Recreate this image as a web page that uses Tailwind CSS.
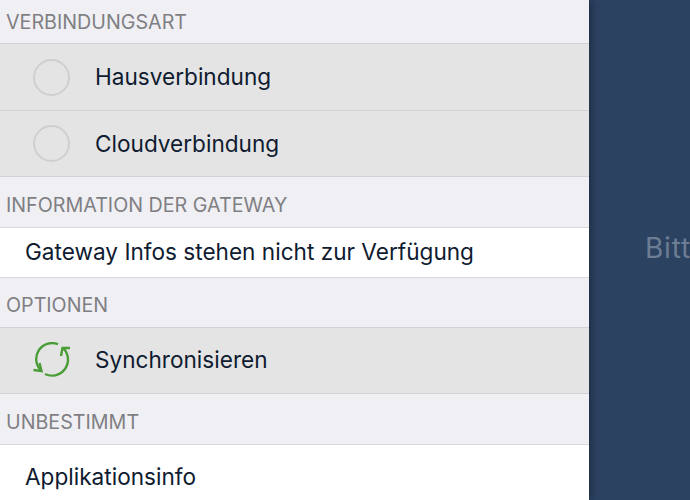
<!DOCTYPE html>
<html lang="de">
<head>
    <meta charset="UTF-8">
    <meta name="viewport" content="width=device-width, initial-scale=1.0">
    <title>Einstellungen</title>
    <script src="https://cdn.jsdelivr.net/npm/@tailwindcss/browser@4"></script>
</head>
<body class="bg-[#2c4261] overflow-hidden font-['Inter',sans-serif]">
    <div class="flex w-[690px] h-[500px] overflow-hidden">
        <!-- Menu -->
        <div class="w-[589px] h-[500px] shrink-0 bg-[#efeff4] shadow-[2px_0_8px_rgba(0,0,0,0.35)] z-10">
            <div class="h-[43px] pl-[6px] pt-[11px] text-[19.7px] leading-[22px] text-[#7f7f83]">VERBINDUNGSART</div>
            <div class="h-[67px] flex items-center bg-[#e4e4e4] border-t border-[#d2d2d4]">
                <div class="w-[37px] h-[37px] ml-[33px] rounded-full border-2 border-[#cfcfd3]"></div>
                <div class="ml-[25px] text-[22.6px] text-[#0f1b30]">Hausverbindung</div>
            </div>
            <div class="h-[67px] flex items-center bg-[#e4e4e4] border-t border-b border-[#d2d2d4]">
                <div class="w-[37px] h-[37px] ml-[33px] rounded-full border-2 border-[#cfcfd3]"></div>
                <div class="ml-[25px] text-[22.6px] text-[#0f1b30]">Cloudverbindung</div>
            </div>

            <div class="h-[50px] pl-[6px] pt-[17px] text-[19.7px] leading-[22px] text-[#7f7f83]">INFORMATION DER GATEWAY</div>
            <div class="h-[51px] flex items-center pl-[25px] pb-[2px] bg-white border-t border-b border-[#d8d8da] text-[22.6px] text-[#0f1b30]">Gateway Infos stehen nicht zur Verfügung</div>

            <div class="h-[49px] pl-[6px] pt-[16px] text-[19.7px] leading-[22px] text-[#7f7f83]">OPTIONEN</div>
            <div class="h-[67px] flex items-center bg-[#e4e4e4] border-t border-b border-[#d2d2d4]">
                <svg class="ml-[33px] w-[37px] h-[37px] shrink-0" viewBox="0 0 37 37" fill="none" stroke="#4a9d36" stroke-width="2.4">
                    <path d="M25 2.2 A16 16 0 0 0 8.5 29"/>
                    <path d="M0.5 28 L8.5 29 L6.5 21"/>
                    <path d="M12 32 A16 16 0 0 0 30 6"/>
                    <path d="M28 14 L29.5 6 L37 6"/>
                </svg>
                <div class="ml-[25px] pb-[1px] text-[22.6px] text-[#0f1b30]">Synchronisieren</div>
            </div>

            <div class="h-[50px] pl-[6px] pt-[17px] text-[19.7px] leading-[22px] text-[#7f7f83]">UNBESTIMMT</div>
            <div class="h-[60px] flex items-center pl-[25px] pt-[5px] bg-white border-t border-[#d8d8da] text-[22.6px] text-[#0f1b30]">Applikationsinfo</div>
        </div>

        <!-- Detail -->
        <div class="flex-1 relative">
            <div class="pl-[56px] pt-[233px] text-[28px] leading-[30px] tracking-[0.8px] whitespace-nowrap text-[#6c7d94]">Bitte</div>
        </div>
    </div>
</body>
</html>
